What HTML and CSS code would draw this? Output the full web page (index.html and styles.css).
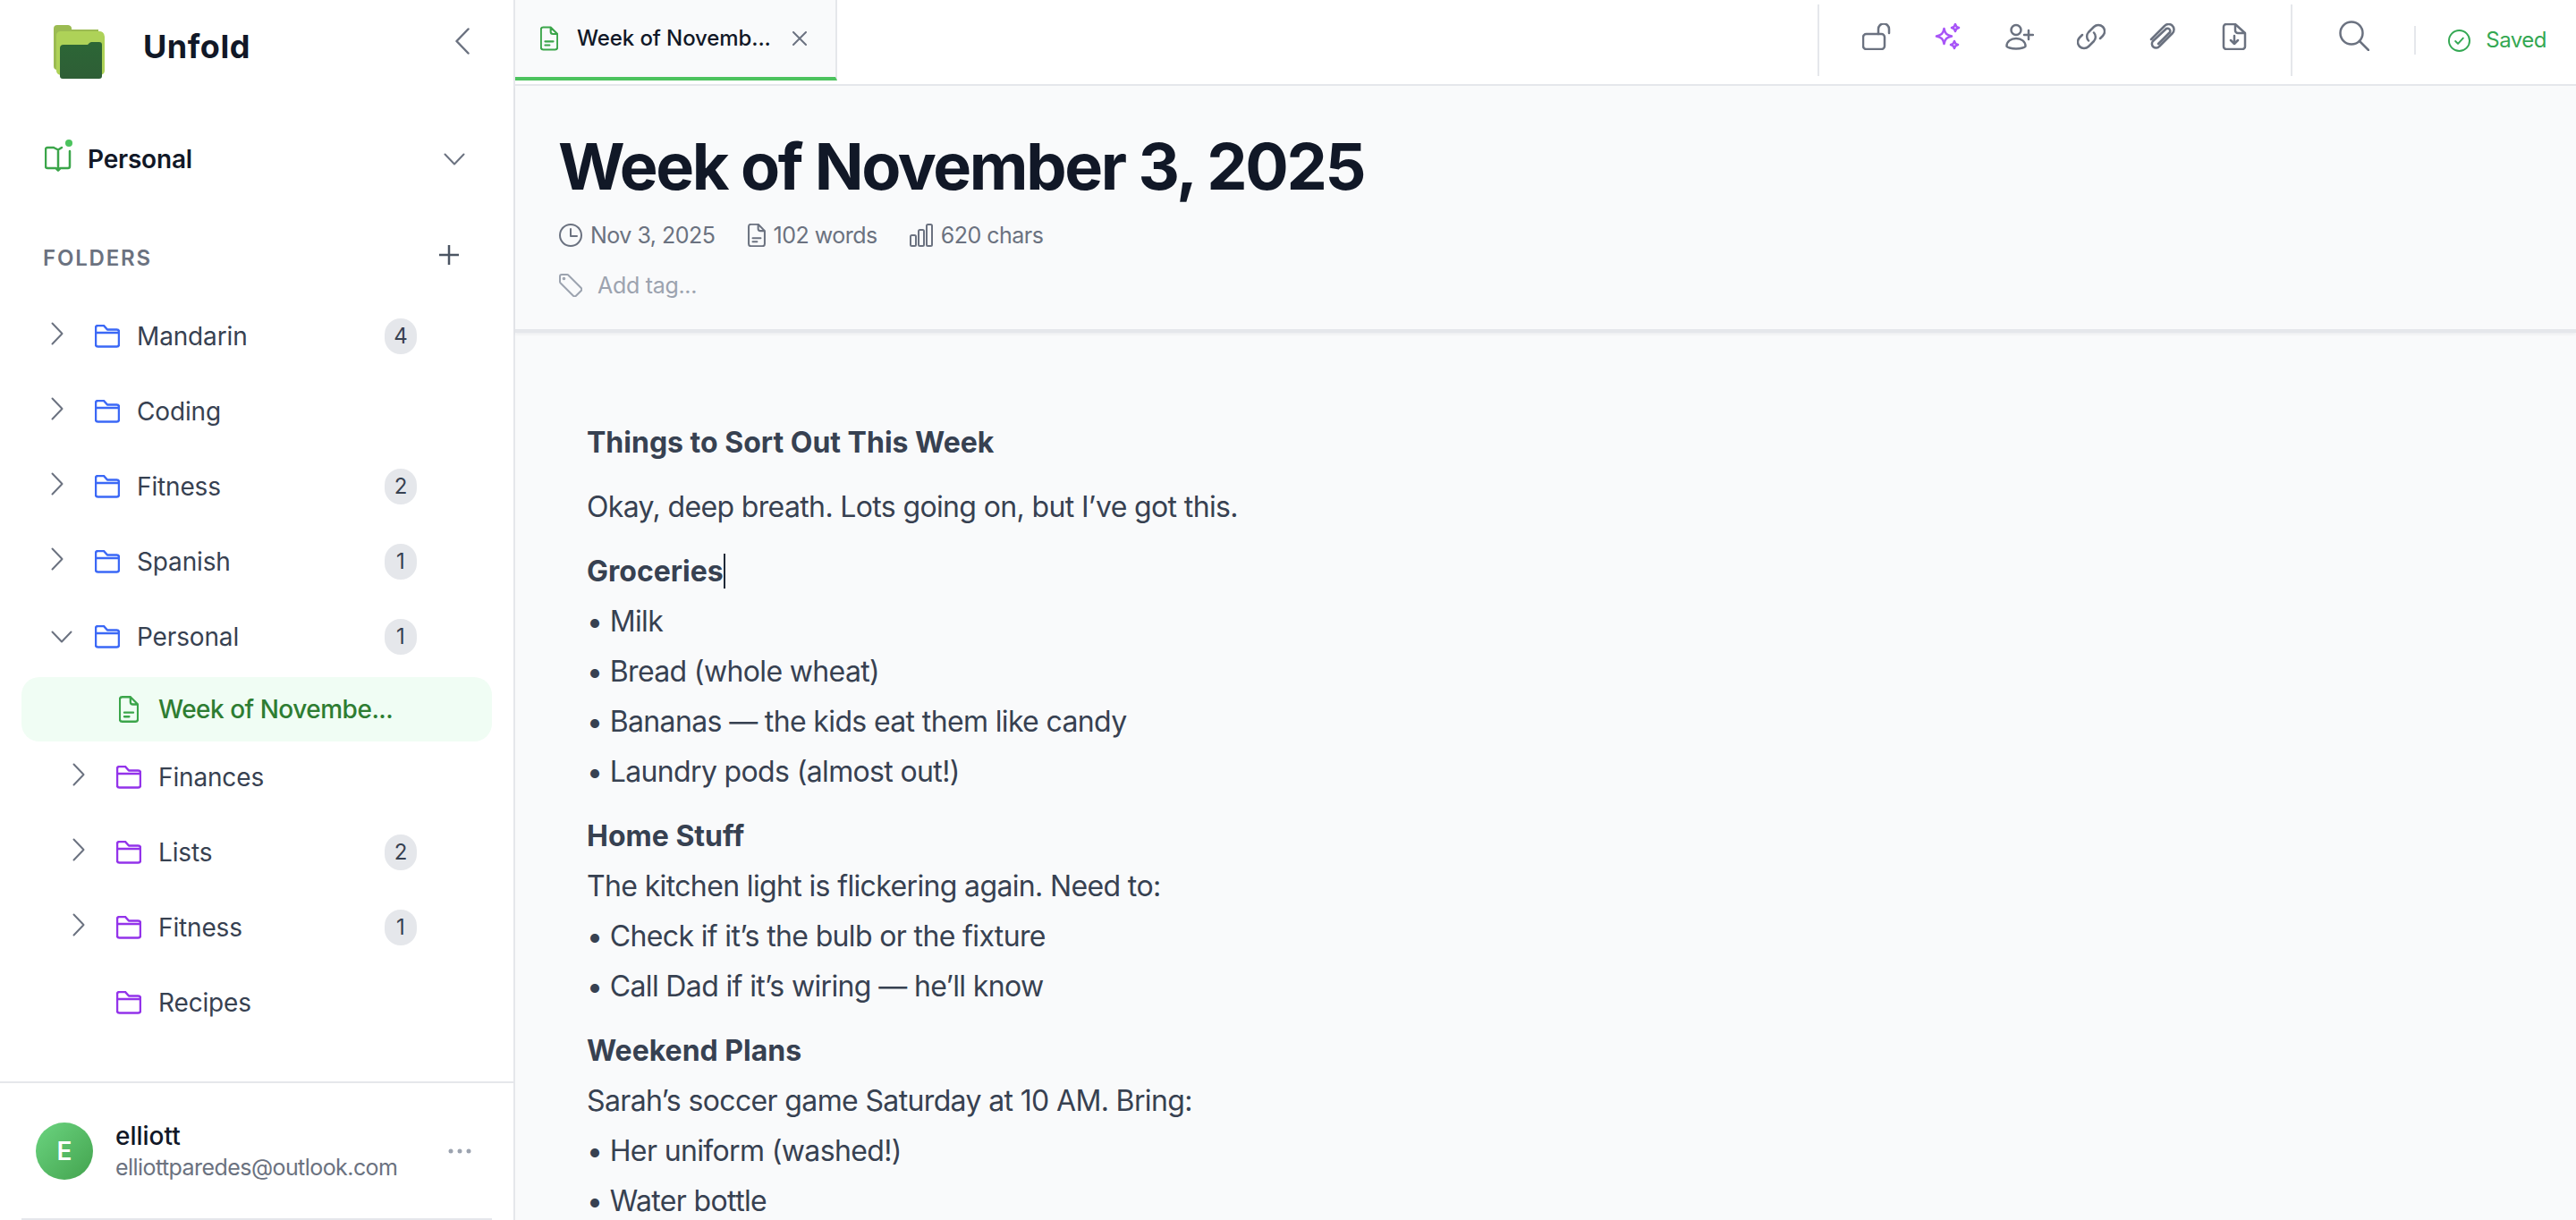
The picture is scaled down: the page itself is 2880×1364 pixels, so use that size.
FILE: index.html
```html
<!DOCTYPE html>
<html lang="en">
<head>
<meta charset="utf-8">
<title>Unfold</title>
<link rel="stylesheet" href="styles.css">
</head>
<body>
<svg class="defs" width="0" height="0" aria-hidden="true">
  <symbol id="folder" viewBox="0 0 28 26"><path d="M1 9V3.500a2.500 2.500 0 0 1 2.500-2.500h6.500l4 4.500h10.500a2.500 2.500 0 0 1 2.500 2.500v14a2.500 2.500 0 0 1-2.500 2.500h-21a2.500 2.500 0 0 1-2.500-2.500V9h26"/></symbol>
  <symbol id="chev-r" viewBox="0 0 14 26"><path d="M1.500 1.500 12.500 13 1.500 24.500"/></symbol>
  <symbol id="chev-d" viewBox="0 0 24 14"><path d="M1.500 1.500 12 12.500 22.500 1.500"/></symbol>
  <symbol id="doc" viewBox="0 0 24 32"><path d="M14 1H4a3 3 0 0 0-3 3v24a3 3 0 0 0 3 3h16a3 3 0 0 0 3-3V10zM14 1v6a3 3 0 0 0 3 3h6M6.500 20h11M6.500 25h6"/></symbol>
</svg>

<aside class="sidebar">
  <div class="brand">
    <svg class="logo" viewBox="0 0 58 61" aria-hidden="true">
      <defs><linearGradient id="front" x1="0" y1="0" x2="0" y2="1"><stop offset="0" stop-color="#2c6636"/><stop offset="1" stop-color="#2e5e36"/></linearGradient></defs>
      <path fill="#9bbb52" d="M0 4a4 4 0 0 1 4-4h12a4 4 0 0 1 4 5h30v45H4a4 4 0 0 1-4-4z"/>
      <path fill="#aed258" d="M3 12a5 5 0 0 1 4-5h43a6 6 0 0 1 7 6v38a5 5 0 0 1-5 5H8a5 5 0 0 1-5-5z"/>
      <path fill="url(#front)" d="M7 26a4 4 0 0 1 4-4h27l2-2a4 4 0 0 1 3-1h8a3 3 0 0 1 3 3v35a3 3 0 0 1-3 3H10a3 3 0 0 1-3-3z"/>
    </svg>
    <span class="brand-name">Unfold</span>
    <svg class="collapse" viewBox="0 0 16 30" aria-hidden="true"><path d="M14.500 1.500 1.500 15 14.500 28.500"/></svg>
  </div>

  <div class="workspace">
    <svg class="ws-icon" viewBox="0 0 32 36" aria-hidden="true">
      <path class="ws-book" d="M10 9H3a2 2 0 0 0-2 2v19a2 2 0 0 0 2 2h9.500l2.500 2.500 2.500-2.500H26a2 2 0 0 0 2-2V13M15 33V11.500M10 9l5 2.500 4-2.500"/>
      <circle class="ws-dot" cx="27" cy="4" r="4"/>
    </svg>
    <span class="ws-name">Personal</span>
    <svg class="ic-chev-d ws-chev"><use href="#chev-d"/></svg>
  </div>

  <div class="folders-head">
    <span class="folders-label">FOLDERS</span>
    <svg class="plus" viewBox="0 0 22 22" aria-hidden="true"><path d="M11 0v22M0 11h22"/></svg>
  </div>

  <nav class="tree">
    <div class="row"><svg class="ic-chev-r"><use href="#chev-r"/></svg><svg class="ic-folder blue"><use href="#folder"/></svg><span class="label">Mandarin</span><span class="badge">4</span></div>
    <div class="row"><svg class="ic-chev-r"><use href="#chev-r"/></svg><svg class="ic-folder blue"><use href="#folder"/></svg><span class="label">Coding</span></div>
    <div class="row"><svg class="ic-chev-r"><use href="#chev-r"/></svg><svg class="ic-folder blue"><use href="#folder"/></svg><span class="label">Fitness</span><span class="badge">2</span></div>
    <div class="row"><svg class="ic-chev-r"><use href="#chev-r"/></svg><svg class="ic-folder blue"><use href="#folder"/></svg><span class="label">Spanish</span><span class="badge">1</span></div>
    <div class="row"><svg class="ic-chev-d row-chev-d"><use href="#chev-d"/></svg><svg class="ic-folder blue"><use href="#folder"/></svg><span class="label">Personal</span><span class="badge">1</span></div>
    <div class="note"><svg class="ic-doc"><use href="#doc"/></svg><span class="note-label">Week of Novembe...</span></div>
    <div class="row sub"><svg class="ic-chev-r"><use href="#chev-r"/></svg><svg class="ic-folder purple"><use href="#folder"/></svg><span class="label">Finances</span></div>
    <div class="row sub"><svg class="ic-chev-r"><use href="#chev-r"/></svg><svg class="ic-folder purple"><use href="#folder"/></svg><span class="label">Lists</span><span class="badge">2</span></div>
    <div class="row sub"><svg class="ic-chev-r"><use href="#chev-r"/></svg><svg class="ic-folder purple"><use href="#folder"/></svg><span class="label">Fitness</span><span class="badge">1</span></div>
    <div class="row sub"><span class="chev-space"></span><svg class="ic-folder purple"><use href="#folder"/></svg><span class="label">Recipes</span></div>
  </nav>

  <div class="user">
    <div class="avatar">E</div>
    <div class="user-text">
      <span class="user-name">elliott</span>
      <span class="user-mail">elliottparedes@outlook.com</span>
    </div>
    <svg class="dots" viewBox="0 0 26 6" aria-hidden="true"><circle cx="3" cy="3" r="2.500"/><circle cx="13" cy="3" r="2.500"/><circle cx="23" cy="3" r="2.500"/></svg>
  </div>
  <div class="bottom-line"></div>
</aside>

<main class="main">
  <header class="topbar">
    <div class="tab">
      <svg class="tab-doc"><use href="#doc"/></svg>
      <span class="tab-title">Week of Novemb...</span>
      <svg class="tab-close" viewBox="0 0 16 16" aria-hidden="true"><path d="M1 1l14 14M15 1 1 15"/></svg>
    </div>
    <div class="tools">
      <span class="tool"><svg class="tool-ic" viewBox="0 0 32 30"><rect x="1" y="12" width="24" height="17" rx="3.500"/><path d="M18 12V6.500a6 6 0 0 1 12 0V11"/></svg></span>
      <span class="tool"><svg class="tool-ic ai" viewBox="0 0 32 30"><path d="M11.500 6c1 5.500 3 7.500 8.500 8.500-5.500 1-7.500 3-8.500 8.500-1-5.500-3-7.500-8.500-8.500C8.500 13.500 10.500 11.500 11.500 6zM24 1c.5 2.500 1.500 3.500 4 4-2.500.5-3.500 1.500-4 4-.5-2.500-1.500-3.500-4-4 2.500-.5 3.500-1.500 4-4zM23 20c.5 2.500 1.500 3.500 4 4-2.500.5-3.500 1.500-4 4-.5-2.500-1.500-3.500-4-4 2.500-.5 3.500-1.500 4-4z"/></svg></span>
      <span class="tool"><svg class="tool-ic" viewBox="0 0 32 30"><circle cx="12" cy="7.500" r="5.500"/><path d="M1.500 25.500c0-5 4.500-8.500 10.500-8.500s10.500 3.500 10.500 8.500c0 1.500-5 3-10.500 3s-10.500-1.500-10.500-3zM26 8v10M21 13h10"/></svg></span>
      <span class="tool"><svg class="tool-ic" viewBox="0 0 32 30"><path d="M13 19.500a7 7 0 0 1 0-9.500l6-6a7 7 0 0 1 10 10l-3 3M19 10.500a7 7 0 0 1 0 9.500l-6 6A7 7 0 0 1 3 16l3-3"/></svg></span>
      <span class="tool"><svg class="tool-ic" viewBox="0 0 32 30"><path d="M3 18 18 3a6 6 0 0 1 9 8L12 26a4.500 4.500 0 0 1-7-6L20 6a3 3 0 0 1 4 4L11 23"/></svg></span>
      <span class="tool"><svg class="tool-ic" viewBox="0 0 32 30"><path d="M17 1H7a3 3 0 0 0-3 3v22a3 3 0 0 0 3 3h18a3 3 0 0 0 3-3V11zM17 1v7a3 3 0 0 0 3 3h8M16 14v9M12 19l4 4 4-4"/></svg></span>
    </div>
    <div class="search-wrap">
      <svg class="search" viewBox="0 0 34 34" aria-hidden="true"><circle cx="14" cy="14" r="12.500"/><path d="m23 23 10 10"/></svg>
      <span class="mini-divider"></span>
    </div>
    <div class="saved">
      <svg class="saved-ic" viewBox="0 0 26 26" aria-hidden="true"><circle cx="13" cy="13" r="12"/><path d="m8.500 13.500 3 3 6-6.500"/></svg>
      <span>Saved</span>
    </div>
  </header>

  <section class="doc-head">
    <h1 class="title">Week of November 3, 2025</h1>
    <div class="meta">
      <span class="meta-item"><svg class="meta-ic" viewBox="0 0 26 26"><circle cx="13" cy="13" r="12"/><path d="M13 6v8h7"/></svg>Nov 3, 2025</span>
      <span class="meta-item"><svg class="meta-doc"><use href="#doc"/></svg>102 words</span>
      <span class="meta-item"><svg class="meta-ic" viewBox="0 0 26 26"><rect x="1" y="13" width="6" height="12" rx="1.500"/><rect x="10" y="7" width="6" height="18" rx="1.500"/><rect x="19" y="1" width="6" height="24" rx="1.500"/></svg>620 chars</span>
    </div>
    <div class="tags">
      <svg class="tag-ic" viewBox="0 0 26 26" aria-hidden="true"><path d="M3 1h6a2 2 0 0 1 1.500.7l14 14a2.500 2.500 0 0 1 0 3.500l-5.300 5.300a2.500 2.500 0 0 1-3.500 0l-14-14A2 2 0 0 1 1 9V3a2 2 0 0 1 2-2z"/><circle cx="5.500" cy="5.500" r=".8"/></svg>
      <span>Add tag...</span>
    </div>
  </section>

  <article class="editor">
    <p><strong>Things to Sort Out This Week</strong></p>
    <p>Okay, deep breath. Lots going on, but I’ve got this.</p>
    <p><strong class="caret">Groceries</strong><br>• Milk<br>• Bread (whole wheat)<br>• Bananas — the kids eat them like candy<br>• Laundry pods (almost out!)</p>
    <p><strong>Home Stuff</strong><br>The kitchen light is flickering again. Need to:<br>• Check if it’s the bulb or the fixture<br>• Call Dad if it’s wiring — he’ll know</p>
    <p><strong>Weekend Plans</strong><br>Sarah’s soccer game Saturday at 10 AM. Bring:<br>• Her uniform (washed!)<br>• Water bottle</p>
  </article>
</main>
</body>
</html>
```
FILE: styles.css
```css
* { box-sizing: border-box; }
html, body { margin: 0; height: 1364px; overflow: hidden; }
body {
  display: flex;
  font-family: Inter, "Liberation Sans", sans-serif;
  background: #fff;
  color: #111827;
}
.defs { position: absolute; }
svg { display: block; flex: none; fill: none; stroke-linecap: round; stroke-linejoin: round; }

/* Sidebar */
.sidebar {
  width: 576px;
  height: 1364px;
  flex: none;
  display: flex;
  flex-direction: column;
  border-right: 2px solid #e5e7eb;
  background: #fff;
}
.brand { height: 116px; display: flex; padding-left: 60px; align-items: flex-start; }
.logo { width: 58px; height: 61px; margin-top: 28px; }
.brand-name { margin: 30px 0 0 42px; width: 121px; font-size: 36px; line-height: 44px; font-weight: 700; letter-spacing: .5px; }
.collapse { width: 16px; height: 30px; margin: 31px 0 0 228px; stroke: #6b7280; stroke-width: 2.500; }
.workspace { height: 60px; margin-top: 32px; padding-left: 50px; display: flex; align-items: center; }
.ws-icon { width: 32px; height: 36px; margin-top: -8px; }
.ws-book { stroke: #3ba54a; stroke-width: 2.500; }
.ws-dot { fill: #4cc35e; }
.ws-name { margin-left: 16px; width: 118px; font-size: 28px; font-weight: 600; line-height: 36px; letter-spacing: -.2px; white-space: nowrap; }
.ic-chev-d { width: 24px; height: 14px; stroke: #6b7280; stroke-width: 2; }
.ws-chev { margin-left: 280px; }
.folders-head { height: 40px; margin-top: 61px; padding-left: 48px; display: flex; align-items: center; }
.folders-label { font-size: 24px; line-height: 32px; font-weight: 600; color: #6b7280; letter-spacing: 1.800px; width: 443px; }
.plus { width: 22px; height: 22px; margin-top: -8px; stroke: #4b5563; stroke-width: 2.500; stroke-linecap: butt; }

.tree { margin-top: 33px; display: flex; flex-direction: column; gap: 16px; }
.row { height: 68px; display: flex; align-items: center; padding-left: 57px; }
.row.sub { padding-left: 81px; }
.ic-chev-r { width: 14px; height: 26px; margin-right: 35px; margin-top: -6px; stroke: #6b7280; stroke-width: 2; }
.chev-space { width: 49px; flex: none; }
.row-chev-d { margin-right: 25px; }
.ic-folder { width: 28px; height: 26px; stroke-width: 2.500; }
.blue { stroke: #3b68f6; }
.purple { stroke: #9333ea; }
.label { margin-left: 19px; font-size: 28px; line-height: 36px; color: #374151; flex: 1; letter-spacing: -.15px; }
.badge {
  min-width: 36px;
  height: 40px;
  margin-right: 108px;
  padding: 0 8px;
  border-radius: 20px;
  background: #e5e7eb;
  color: #374151;
  font-size: 24px;
  line-height: 40px;
  text-align: center;
}
.note {
  height: 72px;
  margin: -5px 24px -10px 24px;
  padding-left: 109px;
  border-radius: 20px;
  background: #f0fdf4;
  display: flex;
  align-items: center;
}
.ic-doc { width: 22px; height: 30px; stroke: #3ba54a; stroke-width: 2.500; }
.note-label { margin-left: 22px; font-size: 28px; line-height: 36px; font-weight: 500; color: #2e7d32; letter-spacing: -.5px; }

.user {
  margin-top: auto;
  height: 153px;
  border-top: 2px solid #e5e7eb;
  display: flex;
  align-items: center;
  padding-left: 40px;
}
.avatar {
  width: 64px;
  height: 64px;
  border-radius: 50%;
  background: linear-gradient(135deg, #6bd480, #43a34e);
  color: #fff;
  font-size: 28px;
  font-weight: 600;
  line-height: 64px;
  text-align: center;
  flex: none;
}
.user-text { margin-left: 25px; width: 372px; display: flex; flex-direction: column; }
.user-name { font-size: 28px; line-height: 36px; font-weight: 500; }
.user-mail { font-size: 25px; line-height: 34px; color: #6b7280; letter-spacing: -.56px; }
.dots { width: 26px; height: 6px; fill: #9ca3af; }
.bottom-line { height: 2px; margin: 0 24px; background: #e5e7eb; }

/* Main */
.main { flex: 1; min-width: 0; height: 1364px; display: flex; flex-direction: column; background: #f9fafb; }
.topbar { height: 96px; flex: none; display: flex; background: #fff; border-bottom: 2px solid #e5e7eb; }
.tab {
  width: 360px;
  height: 90px;
  padding-left: 28px;
  display: flex;
  align-items: center;
  background: #f9fafb;
  border-right: 2px solid #e5e7eb;
  border-bottom: 4px solid #4cc35e;
}
.tab-doc { width: 20px; height: 28px; stroke: #3ba54a; stroke-width: 2.500; }
.tab-title { margin-left: 21px; font-size: 24px; line-height: 34px; font-weight: 500; color: #111827; width: 241px; letter-spacing: -.1px; white-space: nowrap; }
.tab-close { width: 16px; height: 16px; stroke: #6b7280; stroke-width: 2; }
.tools {
  margin-left: auto;
  height: 80px;
  margin-top: 5px;
  padding: 0 23px 0 24px;
  display: flex;
  border-left: 2px solid #e5e7eb;
  border-right: 2px solid #e5e7eb;
}
.tool { width: 80px; display: flex; justify-content: center; align-items: center; margin-top: -8px; }
.tool-ic { width: 32px; height: 30px; stroke: #6b7280; stroke-width: 2.500; }
.tool-ic.ai { stroke: #a855f7; }
.search-wrap { display: flex; align-items: center; padding-left: 52px; }
.search { width: 34px; height: 34px; margin-top: -14px; stroke: #6b7280; stroke-width: 2.500; }
.mini-divider { width: 2px; height: 32px; margin: -4px 0 0 50px; background: #e5e7eb; }
.saved { display: flex; align-items: center; gap: 17px; margin: -4px 33px 0 36px; color: #34a853; font-size: 24px; line-height: 36px; font-weight: 400; letter-spacing: -.5px; }
.saved-ic { width: 25px; height: 25px; stroke: currentColor; stroke-width: 2; }

.doc-head { height: 276px; flex: none; padding: 44px 0 0 49px; border-bottom: 4px solid #e5e7eb; box-shadow: 0 2px 3px rgba(17, 24, 39, .05); }
.title { margin: 0 0 0 -1px; font-size: 72px; line-height: 92px; font-weight: 700; color: #111827; letter-spacing: -2.350px; white-space: nowrap; }
.meta { display: flex; gap: 36px; margin-top: 13px; height: 36px; align-items: center; font-size: 25px; line-height: 36px; color: #6b7280; letter-spacing: -.5px; }
.meta-item { display: flex; align-items: center; gap: 9px; }
.meta-ic { width: 26px; height: 26px; stroke: #6b7280; stroke-width: 2; }
.meta-doc { width: 20px; height: 26px; stroke: #6b7280; stroke-width: 2.500; }
.tags { display: flex; align-items: center; gap: 17px; margin-top: 20px; height: 36px; font-size: 25px; line-height: 36px; color: #9ca3af; letter-spacing: -.3px; }
.tag-ic { width: 26px; height: 26px; stroke: #9ca3af; stroke-width: 2; }

.editor { padding: 95px 80px 0; font-size: 32px; line-height: 56px; color: #374151; letter-spacing: -.64px; }
.editor p { margin: 0 0 16px; }
.editor strong { font-weight: 700; letter-spacing: 0; }
.caret { border-right: 2px solid #1f2937; }
```
